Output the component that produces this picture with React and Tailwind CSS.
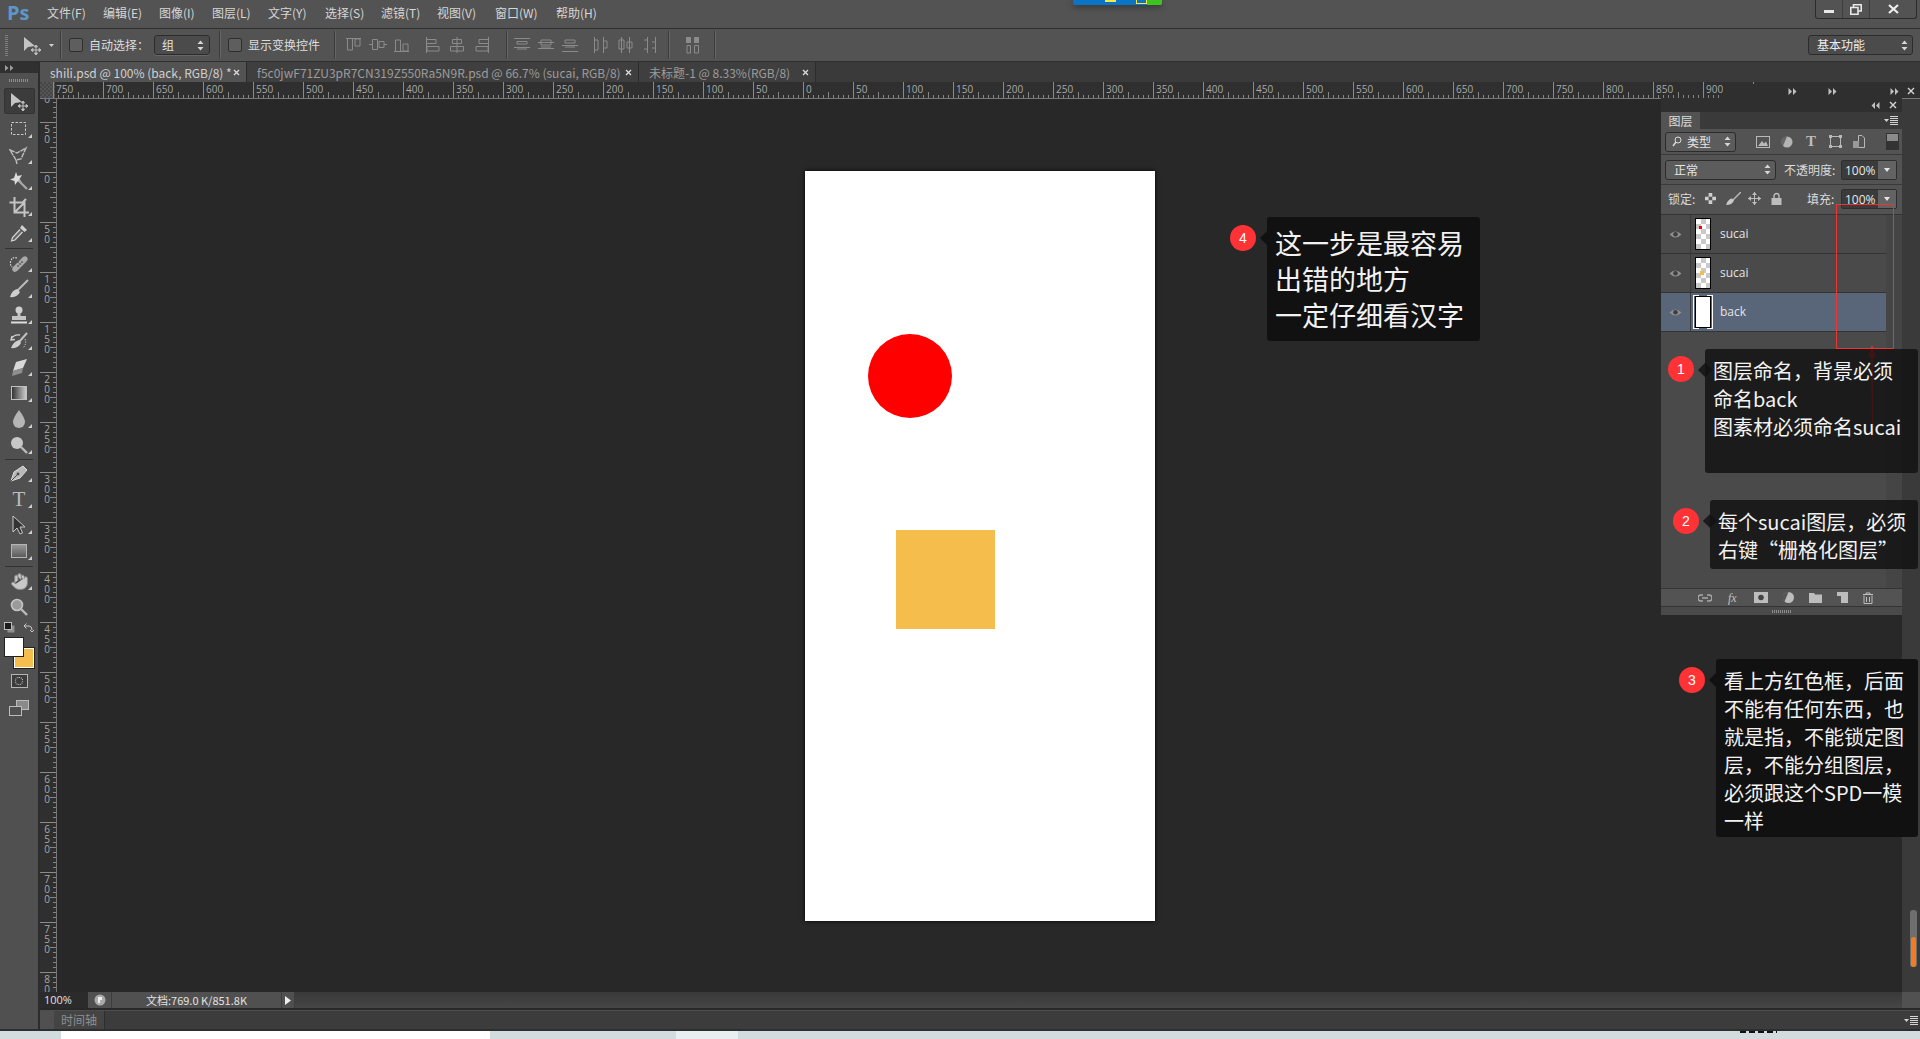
import React from "react";
import { Hand } from "lucide-react";

const cjk = "font-['Noto_Sans_CJK_SC','Noto_Sans',sans-serif]";

const menus = [
  ["文件(F)", "w-[56px]"],
  ["编辑(E)", "w-[56px]"],
  ["图像(I)", "w-[53px]"],
  ["图层(L)", "w-[56px]"],
  ["文字(Y)", "w-[57px]"],
  ["选择(S)", "w-[56px]"],
  ["滤镜(T)", "w-[56px]"],
  ["视图(V)", "w-[58px]"],
  ["窗口(W)", "w-[61px]"],
  ["帮助(H)", "w-[64px]"],
];

const hLabels = [750, 700, 650, 600, 550, 500, 450, 400, 350, 300, 250, 200, 150, 100, 50, 0, 50, 100, 150, 200, 250, 300, 350, 400, 450, 500, 550, 600, 650, 700, 750, 800, 850, 900, 950];
const vLabels = [100, 50, 0, 50, 100, 150, 200, 250, 300, 350, 400, 450, 500, 550, 600, 650, 700, 750, 800];

// small ticks shared by both rulers
const tickOffsets = [5, 10, 15, 20, 25, 30, 35, 40, 45];

const HRulerCell = ({ label }) => (
  <div className="relative w-[50px] h-full shrink-0 border-l border-[#8a8a8a]">
    <span className="block pl-[2px] pt-[1px] text-[10px] leading-[12px] text-[#a9a9a9] font-['Open_Sans',sans-serif]">{label}</span>
    <svg width="50" height="6" className="absolute bottom-0 left-0">
      {tickOffsets.map((t) => (
        <line key={t} x1={t - 0.5} x2={t - 0.5} y1={t === 25 ? 0 : 3} y2="6" stroke="#858585" />
      ))}
    </svg>
  </div>
);

const VRulerCell = ({ label }) => (
  <div className="relative h-[50px] w-full shrink-0 border-t border-[#8a8a8a]">
    <div className="flex flex-col pl-[3px] pt-[1px] w-[11px] items-center">
      {String(label).split("").map((d, i) => (
        <span key={i} className="block h-[10px] text-[10px] leading-[10px] text-[#a9a9a9] font-['Open_Sans',sans-serif]">{d}</span>
      ))}
    </div>
    <svg width="6" height="50" className="absolute right-0 top-0">
      {tickOffsets.map((t) => (
        <line key={t} y1={t - 0.5} y2={t - 0.5} x1={t === 25 ? 0 : 3} x2="6" stroke="#858585" />
      ))}
    </svg>
  </div>
);

const Spinner = ({ className = "" }) => (
  <svg width="7" height="11" viewBox="0 0 7 11" className={className}>
    <path d="M3.5 0.5 L6.5 4 H0.5 Z M3.5 10.5 L0.5 7 H6.5 Z" fill="#d6d6d6" />
  </svg>
);

const Select = ({ text, className }) => (
  <div className={`flex items-center justify-between rounded-[3px] border border-[#2c2c2c] bg-[#4b4b4b] text-[12px] text-[#e2e2e2] shadow-[0_1px_0_#666] ${className}`}>
    <span>{text}</span>
    <Spinner />
  </div>
);

const Check = ({ className = "" }) => (
  <div className={`size-[14px] rounded-[2px] border border-[#2e2e2e] bg-[#5e5e5e] ${className}`} />
);

const Sep = ({ className = "" }) => <div className={`w-px h-[28px] bg-[#3c3c3c] border-r border-[#666] box-content ${className}`} />;

// option bar align buttons, drawn with plain rects and lines
const alignIcons = [
  "M1 1.5H16 M2.5 1.5V13H7.5V1.5 M10 2H15V9H10Z",
  "M0 7.5H3 M15 7.5H18 M3.5 2.5V12.5H8.5V2.5Z M10 4.5H15V10.5H10Z",
  "M1 14.5H16 M2.5 14.5V3H7.5V14.5 M10 14V7H15V14Z",
  "M1.5 0V16 M1.5 2.5H11V6.5H1.5 M2 9.5H14V14H2Z",
  "M8 0V16 M3.5 2.5H12.5V6.5H3.5Z M1.5 9.5H14.5V14H1.5Z",
  "M15.5 0V16 M15.5 2.5H6V6.5H15.5 M15 9.5H3V14H15Z",
  "M1 1.5H17 M4 4.5H14 V7 H4Z M1 10.5H17 M4 12H14",
  "M1 5.5H17 M4 3H14 V8 H4Z M1 11.5H17 M4 10H14",
  "M1 8.5H17 M4 10H14 M4 6H14 V3H4Z M1 14.5H17",
  "M2.5 0V16 M2.5 3H6V13H2.5 M11.5 0V16 M11.5 4H15V11H11.5",
  "M5.5 0V16 M3 3H8V12H3Z M13.5 0V16 M11 5H16V11H11Z",
  "M7.5 0V16 M4 3H7.5V12H4 M15.5 0V16 M12 5H15.5V11H12",
];

const AlignIcon = ({ d }) => (
  <svg width="18" height="16" viewBox="0 0 18 16" className="shrink-0">
    <path d={d} fill="none" stroke="#8b8b8b" strokeWidth="1" />
  </svg>
);

const icons = {
  move: (
    <g>
      <path d="M2 2 L2 16 L6 12 L13 11 Z" fill="#c4c4c4" />
      <path d="M14 10V20 M9 15H19 M14 10l-1.5 2h3Z M14 20l-1.5-2h3Z M9 15l2-1.5v3Z M19 15l-2-1.5v3Z" stroke="#bdbdbd" strokeWidth="1" fill="#bdbdbd" />
    </g>
  ),
  marquee: <rect x="2.5" y="3.5" width="14" height="12" fill="none" stroke="#c8c8c8" strokeDasharray="2.5 1.5" />,
  lasso: <path d="M1 5 L8 8 L17 3 L12 14 L7 15 Z M7 15 L8 19" fill="none" stroke="#bdbdbd" strokeWidth="1.4" strokeDasharray="5 0.8" />,
  wand: (
    <g>
      <path d="M7 1 L8.5 5 L13 4 L10.5 8 L13 12 L8.5 10.5 L6 14 L5.5 10 L1 8.5 L5 7 Z" fill="#dcdcdc" />
      <path d="M9.5 9.5 L18 18" stroke="#a9a9a9" strokeWidth="2.2" />
    </g>
  ),
  crop: <path d="M5.5 0V15.5H20 M0.5 5.5H15.5V20 M5.5 15.5 L15.5 5.5 M17 2 L14 5" fill="none" stroke="#c4c4c4" strokeWidth="2" />,
  eyedropper: (
    <g>
      <path d="M13 2 L18 7 L15.5 9 L11 5 Z" fill="#d0d0d0" />
      <path d="M11 6.5 L3.5 14.5 L2.5 18 L6 17 L13.5 9" fill="#666" stroke="#d5d5d5" strokeWidth="1.2" />
    </g>
  ),
  heal: (
    <g>
      <path d="M4 14 L14 4 Q17 2 18.5 5 Q19.5 7 17 9 L8 18 Q5 20 3.5 17.5 Q2.5 15.5 4 14Z" fill="#aaa" />
      <path d="M8 5 Q3 3 1.5 9 Q1 12 3 14" fill="none" stroke="#d5d5d5" strokeDasharray="1.5 1.2" strokeWidth="1.2" />
      <circle cx="11" cy="11" r="0.9" fill="#555" />
      <circle cx="9" cy="9" r="0.9" fill="#555" />
      <circle cx="13" cy="9" r="0.9" fill="#555" />
      <circle cx="9" cy="13" r="0.9" fill="#555" />
    </g>
  ),
  brush: (
    <g>
      <path d="M19 1 L8 12" stroke="#bcbcbc" strokeWidth="2" />
      <path d="M8 10 Q3 11 1 18 Q8 19 11 13 Z" fill="#cfcfcf" />
    </g>
  ),
  stamp: (
    <g>
      <circle cx="10" cy="5" r="3.5" fill="#cfcfcf" />
      <path d="M8.5 8H11.5V11H17V15H3V11H8.5Z" fill="#c4c4c4" />
      <rect x="2" y="16.5" width="16" height="2" fill="#dcdcdc" />
    </g>
  ),
  history: (
    <g>
      <path d="M18 2 L10 11" stroke="#c0c0c0" strokeWidth="2" />
      <path d="M10 9 Q4 11 2 17 Q9 18 12 12 Z" fill="#cfcfcf" />
      <path d="M2 8 Q5 3 11 4 M3 5 L2 9 L6 8.5" fill="none" stroke="#d0d0d0" strokeWidth="1.4" />
      <path d="M16 8 Q18 13 14 17" fill="none" stroke="#d0d0d0" strokeDasharray="1.3 1.2" />
    </g>
  ),
  eraser: (
    <g>
      <path d="M7 5 L18 2 L14 11 L4 14 Z" fill="#d8d8d8" />
      <path d="M4 14 L14 11 L13 16 L3 19 Z" fill="#8e8e8e" />
    </g>
  ),
  gradient: (
    <g>
      <defs>
        <linearGradient id="toolGrad" x1="0" x2="1">
          <stop offset="0" stopColor="#2e2e2e" />
          <stop offset="1" stopColor="#cfcfcf" />
        </linearGradient>
      </defs>
      <rect x="2.5" y="3.5" width="15" height="13" fill="url(#toolGrad)" stroke="#c0c0c0" />
    </g>
  ),
  blur: <path d="M10 1 Q16 9 16 13 A6 6 0 0 1 4 13 Q4 9 10 1Z" fill="#b5b5b5" />,
  dodge: (
    <g>
      <circle cx="8" cy="8" r="6" fill="#c8c8c8" />
      <path d="M12 12 L18 18" stroke="#bbb" strokeWidth="2.4" />
    </g>
  ),
  pen: (
    <g>
      <path d="M14 3 L18 7 L11 15 L2 18 L5 9 Z" fill="#b9b9b9" stroke="#dadada" />
      <path d="M2 18 L8.5 11.5" stroke="#4a4a4a" />
      <circle cx="9" cy="11" r="1.4" fill="#4a4a4a" />
    </g>
  ),
  path: <path d="M4 1 L4 17 L8 13 L11 19 L13.5 18 L11 12 L16 12 Z" fill="#333" stroke="#c8c8c8" />,
  shape: (
    <g>
      <defs>
        <linearGradient id="toolShape" x1="0" x2="0" y1="0" y2="1">
          <stop offset="0" stopColor="#9a9a9a" />
          <stop offset="1" stopColor="#5a5a5a" />
        </linearGradient>
      </defs>
      <rect x="2.5" y="3.5" width="15" height="13" fill="url(#toolShape)" stroke="#b5b5b5" />
    </g>
  ),
  zoom: (
    <g>
      <circle cx="8" cy="8" r="5.5" fill="#9a9a9a" stroke="#c4c4c4" strokeWidth="1.6" />
      <path d="M12 12 L18 18" stroke="#bbb" strokeWidth="2.4" />
    </g>
  ),
};

const Tool = ({ name, corner = true, active = false, children }) => (
  <div className={`relative flex items-center justify-center w-[31px] h-[26px] mx-auto ${active ? "h-[24px] mb-[2px] rounded-[2px] bg-[#3c3c3c] border border-[#333]" : ""}`}>
    {children || (
      <svg width="20" height="20" viewBox="0 0 20 20">
        {icons[name]}
      </svg>
    )}
    {corner && (
      <svg width="4" height="4" className="absolute right-[3px] bottom-[4px]">
        <path d="M4 0V4H0Z" fill="#cfcfcf" />
      </svg>
    )}
  </div>
);

const ToolSep = ({ className = "" }) => (
  <div className={`flex items-center ${className}`}>
    <div className="mx-[5px] w-[29px] h-px bg-[#333]" />
  </div>
);

const Toolbar = () => (
  <div className="w-[40px] shrink-0 flex flex-col bg-[#505050] border-r-2 border-[#2d2d2d]">
    <div className="h-[11px] bg-[#303030] flex items-center pl-[5px]">
      <svg width="9" height="6"><path d="M0 0L3.5 3L0 6Z M5 0L8.5 3L5 6Z" fill="#9c9c9c" /></svg>
    </div>
    <div className="h-[15px] flex items-center justify-center">
      <div className="w-[20px] h-[3px] bg-[repeating-linear-gradient(90deg,#8c8c8c_0_1px,transparent_1px_2px)]" />
    </div>
    <Tool name="move" corner={false} active />
    <Tool name="marquee" />
    <Tool name="lasso" />
    <Tool name="wand" />
    <Tool name="crop" />
    <Tool name="eyedropper" />
    <ToolSep className="h-[4px]" />
    <Tool name="heal" />
    <Tool name="brush" />
    <Tool name="stamp" />
    <Tool name="history" />
    <Tool name="eraser" />
    <Tool name="gradient" />
    <Tool name="blur" />
    <Tool name="dodge" />
    <ToolSep className="h-[2px]" />
    <Tool name="pen" />
    <Tool name="text">
      <span className="font-['Liberation_Serif',serif] text-[21px] leading-none text-[#bdbdbd]">T</span>
    </Tool>
    <Tool name="path" />
    <Tool name="shape" />
    <ToolSep className="h-[4px]" />
    <Tool name="hand">
      <Hand size={19} fill="#c8c8c8" stroke="#8a8a8a" strokeWidth={1.2} />
    </Tool>
    <Tool name="zoom" corner={false} />
    <div className="h-[14px] flex items-center justify-between px-[4px]">
      <svg width="11" height="11"><rect x="3.5" y="3.5" width="7" height="7" fill="#8e8e8e" /><rect x="0.5" y="0.5" width="7" height="7" fill="#1c1c1c" stroke="#bbb" /></svg>
      <svg width="11" height="11" viewBox="0 0 11 11"><path d="M1 4H6Q9 4 9 8 M1 4l2.5-2.5M1 4l2.5 2.5 M9 10l-2-2M9 10l2-2" fill="none" stroke="#c8c8c8" /></svg>
    </div>
    <div className="relative h-[37px] mt-[3px]">
      <div className="absolute left-[14px] top-[11px] size-[20px] bg-[#f4bd4c] border border-white outline outline-[#222]" />
      <div className="absolute left-[4px] top-0 size-[20px] bg-white border border-[#222]" />
    </div>
    <div className="mx-auto w-[17px] h-[14px] border border-[#b5b5b5] bg-[#3c3c3c] flex items-center justify-center">
      <div className="size-[8px] rounded-full border border-dotted border-[#dadada]" />
    </div>
    <div className="mt-[12px] relative mx-auto w-[20px] h-[16px]">
      <div className="absolute right-0 top-0 w-[13px] h-[10px] bg-[#8a8a8a] border border-[#bcbcbc]" />
      <div className="absolute left-0 bottom-0 w-[13px] h-[10px] bg-[#505050] border border-[#bcbcbc]" />
    </div>
  </div>
);

const OptionsBar = () => (
  <div className={`relative h-[34px] shrink-0 flex items-center bg-[#535353] border-t border-b border-[#2f2f2f] text-[12px] text-[#dddddd] ${cjk}`}>
    <div className="ml-[5px] w-[3px] h-[22px] bg-[repeating-linear-gradient(0deg,#7e7e7e_0_1px,transparent_1px_2px)]" />
    <svg width="20" height="20" viewBox="0 0 20 20" className="ml-[14px]">{icons.move}</svg>
    <svg width="5" height="3" className="ml-[7px]"><path d="M0 0H5L2.5 3Z" fill="#d0d0d0" /></svg>
    <Sep className="ml-[6px]" />
    <Check className="ml-[7px]" />
    <span className="ml-[6px] w-[53px] whitespace-nowrap">自动选择：</span>
    <Select text="组" className="ml-[12px] w-[56px] h-[20px] pl-[7px] pr-[5px]" />
    <Sep className="ml-[9px]" />
    <Check className="ml-[7px]" />
    <span className="ml-[6px] whitespace-nowrap">显示变换控件</span>
    <Sep className="ml-[14px]" />
    <div className="ml-[9px] flex gap-[6px]">
      {alignIcons.slice(0, 3).map((d) => <AlignIcon key={d} d={d} />)}
    </div>
    <div className="ml-[14px] flex gap-[6px]">
      {alignIcons.slice(3, 6).map((d) => <AlignIcon key={d} d={d} />)}
    </div>
    <Sep className="ml-[15px]" />
    <div className="ml-[5px] flex gap-[6px]">
      {alignIcons.slice(6, 9).map((d) => <AlignIcon key={d} d={d} />)}
    </div>
    <div className="ml-[13px] flex gap-[6px]">
      {alignIcons.slice(9, 12).map((d) => <AlignIcon key={d} d={d} />)}
    </div>
    <Sep className="ml-[10px]" />
    <svg width="18" height="18" viewBox="0 0 18 18" className="ml-[14px]">
      <path d="M2 1H7V7H2Z M10 1H15V7H10Z" fill="#8b8b8b" />
      <path d="M3 9.5H6.5V17H3Z M10.5 9.5H14.5V17H10.5Z" fill="none" stroke="#8b8b8b" />
    </svg>
    <Sep className="ml-[12px]" />
    <div className="ml-auto mr-[7px] w-[105px] h-[20px] flex items-center justify-between rounded-[3px] border border-[#2c2c2c] bg-[#4b4b4b] pl-[8px] pr-[4px] text-[#ececec]">
      <span>基本功能</span>
      <Spinner />
    </div>
  </div>
);

const tabs = [
  { text: "shili.psd @ 100% (back, RGB/8) *", w: "w-[207px]", active: true },
  { text: "f5c0jwF71ZU3pR7CN319Z550Ra5N9R.psd @ 66.7% (sucai, RGB/8)", w: "w-[392px]" },
  { text: "未标题-1 @ 8.33%(RGB/8)", w: "w-[177px]" },
];

const Tabs = () => (
  <div className="h-[20px] shrink-0 flex bg-[#3a3a3a] text-[12px]">
    {tabs.map((t) => (
      <div
        key={t.text}
        className={`${t.w} flex items-center justify-between pl-[10px] pr-[6px] pt-[1px] border-r border-[#2c2c2c] whitespace-nowrap ${t.active ? "bg-[#535353] text-[#d0d0d0]" : "bg-[#3f3f3f] text-[#9c9c9c]"} ${cjk}`}
      >
        <span>{t.text}</span>
        <svg width="7" height="7" className="shrink-0"><path d="M1 1L6 6M6 1L1 6" stroke="#dcdcdc" strokeWidth="1.3" /></svg>
      </div>
    ))}
  </div>
);

const PanelMenu = ({ className = "" }) => (
  <svg width="14" height="9" viewBox="0 0 14 9" className={className}>
    <path d="M0 3H5L2.5 6Z" fill="#d4d4d4" />
    <path d="M6 0.5H14M6 2.5H14M6 4.5H14M6 6.5H14M6 8.5H14" stroke="#d4d4d4" />
  </svg>
);

const DoubleArrow = ({ left = false, className = "" }) => (
  <svg width="9" height="7" className={className}>
    {left ? (
      <path d="M4 0L0.5 3.5L4 7Z M8.5 0L5 3.5L8.5 7Z" fill="#c0c0c0" />
    ) : (
      <path d="M0.5 0L4 3.5L0.5 7Z M5 0L8.5 3.5L5 7Z" fill="#c0c0c0" />
    )}
  </svg>
);

const CloseX = ({ className = "" }) => (
  <svg width="8" height="8" className={className}><path d="M1 1L7 7M7 1L1 7" stroke="#d6d6d6" strokeWidth="1.4" /></svg>
);

const Eye = () => (
  <svg width="13" height="9" viewBox="0 0 13 9">
    <path d="M0.5 4.5Q6.5 -1.5 12.5 4.5Q6.5 10.5 0.5 4.5Z" fill="#8f8f8f" />
    <circle cx="6.5" cy="4.2" r="2.3" fill="#3e3e3e" />
  </svg>
);

const checker = "bg-[repeating-conic-gradient(#c9c9c9_0%_25%,#ffffff_0%_50%)] bg-size-[10px_10px]";

const LayerRow = ({ name, dot, selected, className = "" }) => (
  <div className={`flex items-stretch border-b border-[#333] ${selected ? "bg-[#596578] h-[39px]" : "bg-[#4a4a4a] h-[39px]"} ${className}`}>
    <div className="w-[30px] shrink-0 flex items-center justify-center border-r border-[#3a3a3a]">
      <Eye />
    </div>
    <div className="relative ml-[4px] my-auto">
      <div className={`relative w-[16px] h-[32px] border border-black ${selected ? "bg-white" : checker}`}>
        {dot}
      </div>
      {selected && (
        <div className="absolute -inset-x-[2px] -inset-y-[1px] border border-white [clip-path:polygon(0_0,30%_0,30%_10%,70%_10%,70%_0,100%_0,100%_100%,70%_100%,70%_90%,30%_90%,30%_100%,0_100%)]" />
      )}
    </div>
    <span className="ml-[9px] self-center text-[12px] text-[#e4e4e4] font-['Open_Sans',sans-serif]">{name}</span>
  </div>
);

const PercentField = () => (
  <div className="flex w-[56px] h-[20px] rounded-[2px] border border-[#2e2e2e] text-[12px] text-[#e8e8e8] font-['Open_Sans',sans-serif]">
    <div className="w-[36px] bg-[#3b3b3b] pl-[3px] leading-[19px]">100%</div>
    <div className="flex-1 bg-[#636363] flex items-center justify-center">
      <svg width="6" height="4"><path d="M0 0H6L3 4Z" fill="#e6e6e6" /></svg>
    </div>
  </div>
);

const LayersPanel = () => (
  <div className={`absolute right-[18px] top-[98px] w-[241px] h-[517px] flex flex-col bg-[#4a4a4a] ${cjk}`}>
    <div className="h-[14px] shrink-0 bg-[#2f2f2f] flex items-center justify-end gap-[9px] pr-[5px]">
      <DoubleArrow left />
      <CloseX />
    </div>
    <div className="h-[17px] shrink-0 bg-[#3a3a3a] flex justify-between items-center">
      <div className="w-[39px] h-full bg-[#535353] flex items-center justify-center text-[12px] text-[#dcdcdc]">图层</div>
      <PanelMenu className="mr-[4px]" />
    </div>
    <div className="h-[26px] shrink-0 flex items-center pl-[4px] bg-[#535353] border-b border-[#3a3a3a]">
      <div className="w-[71px] h-[20px] flex items-center rounded-[3px] border border-[#2c2c2c] bg-[#5c5c5c] pl-[6px] pr-[4px] text-[12px] text-[#e4e4e4]">
        <svg width="10" height="11" viewBox="0 0 10 11"><circle cx="6" cy="4" r="3" fill="none" stroke="#ddd" /><path d="M4 6L1 10" stroke="#ddd" strokeWidth="1.4" /></svg>
        <span className="ml-[5px]">类型</span>
        <Spinner className="ml-auto" />
      </div>
      <svg width="14" height="12" viewBox="0 0 14 12" className="ml-[20px]"><rect x="0.5" y="0.5" width="13" height="11" fill="none" stroke="#b8b8b8" /><path d="M2 10L6 5L8 7.5L10 5.5L12 10Z" fill="#b8b8b8" /></svg>
      <svg width="12" height="12" viewBox="0 0 12 12" className="ml-[11px]"><circle cx="6" cy="6" r="5.5" fill="#b4b4b4" /><path d="M6 0.5A5.5 5.5 0 0 0 2 10Z" fill="#666" /></svg>
      <span className="ml-[11px] w-[14px] text-center font-['Liberation_Serif',serif] text-[15px] leading-none text-[#bcbcbc] font-bold">T</span>
      <svg width="13" height="13" viewBox="0 0 13 13" className="ml-[11px]"><rect x="1.5" y="1.5" width="10" height="10" fill="none" stroke="#b8b8b8" /><path d="M0 0H3V3H0Z M10 0H13V3H10Z M0 10H3V13H0Z M10 10H13V13H10Z" fill="#b8b8b8" /></svg>
      <svg width="12" height="13" viewBox="0 0 12 13" className="ml-[11px]"><path d="M5.5 0.5H9L11.5 3V12.5H5.5Z" fill="none" stroke="#b8b8b8" /><rect x="0" y="6" width="6" height="7" fill="#9a9a9a" /></svg>
      <div className="ml-[21px] w-[13px] h-[17px] border border-[#333] bg-[#333]">
        <div className="h-[7px] bg-[#8a8a8a]" />
      </div>
    </div>
    <div className="h-[30px] shrink-0 flex items-center pl-[4px] pr-[5px] bg-[#535353] border-b border-[#3a3a3a]">
      <div className="w-[111px] h-[20px] flex items-center justify-between rounded-[3px] border border-[#2c2c2c] bg-[#5c5c5c] pl-[8px] pr-[4px] text-[12px] text-[#e4e4e4]">
        <span>正常</span>
        <Spinner />
      </div>
      <span className="ml-[8px] text-[12px] text-[#dadada] whitespace-nowrap">不透明度:</span>
      <div className="ml-auto"><PercentField /></div>
    </div>
    <div className="h-[30px] shrink-0 flex items-center pl-[7px] pr-[5px] pb-[2px] bg-[#535353] border-b border-[#333] text-[12px] text-[#dadada]">
      <span className="w-[37px]">锁定:</span>
      <svg width="11" height="11" viewBox="0 0 10 10"><path d="M0 0H10V10H0Z" fill="#cfcfcf" /><path d="M0 0H3.3V3.3H0Z M6.6 0H10V3.3H6.6Z M3.3 3.3H6.6V6.6H3.3Z M0 6.6H3.3V10H0Z M6.6 6.6H10V10H6.6Z" fill="#555" /></svg>
      <svg width="15" height="13" viewBox="0 0 15 13" className="ml-[10px]"><path d="M15 0L7 8" stroke="#b8b8b8" strokeWidth="1.5" /><path d="M6 6.5Q2 7 0 13Q6 13 8 8.5Z" fill="#c8c8c8" /></svg>
      <svg width="13" height="13" viewBox="0 0 13 13" className="ml-[7px]"><path d="M6.5 0V13 M0 6.5H13" stroke="#bdbdbd" /><path d="M6.5 0L4 3H9Z M6.5 13L4 10H9Z M0 6.5L3 4V9Z M13 6.5L10 4V9Z" fill="#bdbdbd" /></svg>
      <svg width="11" height="13" viewBox="0 0 11 13" className="ml-[10px]"><path d="M3 6V4A2.5 2.5 0 0 1 8 4V6" fill="none" stroke="#bdbdbd" strokeWidth="1.4" /><rect x="0.5" y="6" width="10" height="7" fill="#bdbdbd" /></svg>
      <span className="ml-[25px]">填充:</span>
      <div className="ml-auto"><PercentField /></div>
    </div>
    <div className="flex-1 flex min-h-0">
      <div className="flex-1 flex flex-col">
        <LayerRow name="sucai" dot={<div className="absolute left-[3px] top-[7px] size-[3px] bg-[#ff0000]" />} />
        <LayerRow name="sucai" dot={<div className="absolute left-[4px] top-[13px] size-[4px] bg-[#f4bd4c]" />} />
        <LayerRow name="back" selected />
      </div>
      <div className="w-[16px] bg-[#454545]" />
    </div>
    <div className="h-[19px] shrink-0 bg-[#535353] border-t border-b border-[#333] flex items-center pl-[37px] gap-[14px]">
      <svg width="14" height="8" viewBox="0 0 14 8"><path d="M5 1H3A3 3 0 0 0 3 7H5 M9 1H11A3 3 0 0 1 11 7H9 M4 4H10" fill="none" stroke="#a8a8a8" strokeWidth="1.4" /></svg>
      <span className="ml-[2px] w-[12px] text-[12px] italic leading-none text-[#c0c0c0] font-['Liberation_Serif',serif]">fx</span>
      <svg width="14" height="11" viewBox="0 0 14 11"><rect width="14" height="11" fill="#bdbdbd" /><circle cx="7" cy="5.5" r="2.8" fill="#444" /></svg>
      <svg width="13" height="13" viewBox="0 0 13 13"><circle cx="6.5" cy="6.5" r="5.5" fill="#bdbdbd" /><path d="M6.5 1A5.5 5.5 0 0 0 2.5 10.5Z" fill="#555" /></svg>
      <svg width="13" height="11" viewBox="0 0 13 11"><path d="M0 1H5L6 2.5H13V11H0Z" fill="#bdbdbd" /></svg>
      <svg width="11" height="11" viewBox="0 0 11 11" className="ml-[1px]"><path d="M0 0H11V11H4V4H0Z" fill="#bdbdbd" /></svg>
      <svg width="12" height="12" viewBox="0 0 12 12"><path d="M1 2.5H11 M4 2V1H8V2 M2 3.5V11.5H10V3.5 M4.5 5V10 M7.5 5V10" fill="none" stroke="#bdbdbd" /></svg>
    </div>
    <div className="h-[8px] shrink-0 bg-[#4a4a4a] flex items-center justify-center">
      <div className="w-[20px] h-[3px] bg-[repeating-linear-gradient(90deg,#8c8c8c_0_1px,transparent_1px_2px)]" />
    </div>
  </div>
);

const Callout = ({ n, lines, className, boxClass, badgeTop }) => (
  <div className={`absolute flex items-start ${className} ${cjk}`}>
    <div className={`size-[26px] rounded-full bg-[#ff3336] flex items-center justify-center text-[14px] text-white font-['Liberation_Sans',sans-serif] ${badgeTop}`}>{n}</div>
    <div className={`relative ml-[11px] rounded-[3px] px-[8px] py-[8px] text-[20px] leading-[28px] text-[#f2f2f2] whitespace-nowrap ${boxClass}`}>
      <div className="absolute -left-[5px] top-[16px] size-[10px] rotate-45 bg-inherit" />
      <div className="relative">
        {lines.map((l) => <div key={l}>{l}</div>)}
      </div>
    </div>
  </div>
);

export default function App() {
  return (
    <div className="relative w-[1920px] h-[1039px] overflow-hidden flex flex-col bg-[#282828]">
      {/* menu bar */}
      <div className={`h-[28px] shrink-0 flex items-center pb-[2px] bg-[#535353] text-[12px] text-[#d6d6d6] ${cjk}`}>
        <span className="w-[47px] pl-[7px] text-[20px] leading-[24px] font-bold text-[#5d97c9] font-['Open_Sans',sans-serif]">Ps</span>
        {menus.map(([m, w]) => <span key={m} className={`${w} whitespace-nowrap`}>{m}</span>)}
      </div>

      <OptionsBar />

      {/* work area */}
      <div className="flex-1 flex min-h-0">
        <Toolbar />
        <div className="flex-1 min-w-0 flex flex-col">
          <Tabs />
          <div className="h-[17px] shrink-0 flex bg-[#2f2f2f] border-b border-[#777] overflow-hidden">
            <div className="w-[15px] shrink-0 bg-[#4a4a4a] bg-[repeating-conic-gradient(#555_0%_25%,#464646_0%_50%)] bg-size-[4px_4px]" />
            <div className="flex -ml-[2px]">
              {hLabels.map((l, i) => <HRulerCell key={i} label={l} />)}
            </div>
          </div>
          <div className="flex-1 min-h-0 flex">
            <div className="w-[17px] shrink-0 bg-[#2f2f2f] border-r border-[#777] overflow-hidden flex flex-col">
              <div className="-mt-[27px]">
                {vLabels.map((l, i) => <VRulerCell key={i} label={l} />)}
              </div>
            </div>
            <div className="flex-1 flex items-center justify-center">
              {/* document */}
              <div className="relative w-[350px] h-[750px] bg-white shadow-[0_0_4px_#000]">
                <div className="absolute left-[63px] top-[163px] size-[84px] rounded-full bg-[#ff0000]" />
                <div className="absolute left-[91px] top-[359px] size-[99px] bg-[#f4bd4c]" />
              </div>
            </div>
            <div className="w-[18px] shrink-0 bg-[#3a3a3a] flex flex-col justify-end pb-[25px] items-center">
              <div className="ml-[5px] w-[7px] h-[57px] rounded-[3px] bg-[#6f6f6f] flex flex-col justify-end">
                <div className="mx-auto w-[5px] h-[30px] rounded-[3px] bg-[#f47b20]" />
              </div>
            </div>
          </div>
          {/* status bar */}
          <div className="h-[16px] shrink-0 flex text-[11px] bg-[#454545]">
            <div className="w-[48px] bg-[#2b2b2b] pl-[4px] leading-[16px] text-[#e0e0e0] font-['Open_Sans',sans-serif]">100%</div>
            <div className="w-[24px] bg-[#505050] flex items-center justify-center border-r border-[#3d3d3d]">
              <svg width="12" height="12" viewBox="0 0 12 12"><circle cx="6" cy="6" r="5.5" fill="#aaa" /><path d="M4 3H8V6H6V9H4Z" fill="#eee" /></svg>
            </div>
            <div className={`w-[170px] bg-[#505050] flex items-center justify-center text-[#e2e2e2] border-r border-[#3d3d3d] ${cjk}`}>文档:769.0 K/851.8K</div>
            <div className="w-[13px] bg-[#505050] flex items-center justify-center border-r border-[#3d3d3d]">
              <svg width="6" height="9"><path d="M0 0L6 4.5L0 9Z" fill="#eee" /></svg>
            </div>
            <div className="flex-1 bg-linear-to-b from-[#393939] to-[#464646]" />
            <div className="w-[18px] bg-[#515151]" />
          </div>
          {/* timeline */}
          <div className="mt-[2px] h-[19px] shrink-0 flex bg-[#3c3c3c] border-t border-[#4e4e4e]">
            <div className="w-[14px] bg-[#505050]" />
            <div className={`w-[51px] flex items-center justify-center text-[12px] text-[#8f8f8f] border-r border-[#2e2e2e] bg-[#444] ${cjk}`}>时间轴</div>
            <PanelMenu className="ml-auto mr-[2px] mt-[5px]" />
          </div>
        </div>
      </div>

      {/* taskbar peeking out under the window */}
      <div className="h-[10px] shrink-0 border-t-2 border-[#2e2e2e] flex bg-[#d3dbdf]">
        <div className="ml-[61px] w-[429px] bg-white" />
        <div className="ml-[186px] w-[62px] bg-[#e9eef0]" />
        <div className="ml-[1002px] w-[37px] h-[2px] bg-[repeating-linear-gradient(90deg,#111_0_6px,transparent_6px_9px)]" />
      </div>

      {/* tray icon tucked into the top edge */}
      <div className="absolute left-[1073px] top-0 w-[89px] h-[5px] bg-[#0a74c6] rounded-b-[2px] flex shadow-[0_2px_6px_#0006]">
        <div className="ml-[32px] w-[11px] h-[2px] bg-[#f7e64a]" />
        <div className="ml-[20px] w-[11px] h-[4px] border border-t-0 border-[#f7e64a]" />
        <div className="ml-auto w-[15px] bg-[#3ec41f] rounded-br-[2px]" />
      </div>

      {/* window buttons */}
      <div className="absolute right-[3px] top-0 w-[102px] h-[19px] flex items-center border border-t-0 border-[#2c2c2c] rounded-b-[3px] bg-[#535353]">
        <div className="w-[27px] h-full flex items-center justify-center border-r border-[#3d3d3d]">
          <div className="mt-[4px] w-[10px] h-[3px] bg-[#e8e8e8]" />
        </div>
        <div className="w-[27px] h-full flex items-center justify-center border-r border-[#3d3d3d]">
          <svg width="12" height="11" viewBox="0 0 12 11"><path d="M3.5 3V0.8H11.2V7H8.5 M0.8 3.5H8V10.2H0.8Z" fill="none" stroke="#e8e8e8" strokeWidth="1.6" /></svg>
        </div>
        <div className="flex-1 flex items-center justify-center">
          <svg width="11" height="10"><path d="M1 1L10 9M10 1L1 9" stroke="#ededed" strokeWidth="2.2" /></svg>
        </div>
      </div>

      {/* collapsed dock strip over the ruler */}
      <div className="absolute right-0 top-[84px] w-[197px] h-[14px] rounded-tl-[2px] bg-[#2f2f2f] flex items-center pl-[65px]">
        <DoubleArrow />
        <DoubleArrow className="ml-[31px]" />
        <DoubleArrow className="ml-[53px]" />
        <CloseX className="ml-[8px]" />
      </div>

      <LayersPanel />

      {/* red arrow runs behind callout 1 */}
      <svg width="10" height="96" viewBox="0 0 10 96" className="absolute left-[1867px] top-[345px]">
        <path d="M5 0L1 12H9Z" fill="#ff2a2a" />
        <path d="M3.8 10L5.4 95H6.2L6.2 10Z" fill="#ff2a2a" />
      </svg>
      <div className="absolute left-[1836px] top-[204px] w-[58px] h-[145px] border border-[#ee3333]" />

      <Callout
        n="1"
        className="left-[1668px] top-[349px]"
        badgeTop="mt-[7px]"
        boxClass="w-[213px] h-[124px] bg-[#111111d0]"
        lines={["图层命名，背景必须", "命名back", "图素材必须命名sucai"]}
      />
      <Callout
        n="2"
        className="left-[1673px] top-[500px]"
        badgeTop="mt-[8px]"
        boxClass="w-[208px] h-[69px] bg-[#111111d0]"
        lines={["每个sucai图层，必须", "右键“栅格化图层”"]}
      />
      <Callout
        n="3"
        className="left-[1679px] top-[659px]"
        badgeTop="mt-[8px]"
        boxClass="w-[202px] h-[178px] bg-[#111111]"
        lines={["看上方红色框，后面", "不能有任何东西，也", "就是指，不能锁定图", "层，不能分组图层，", "必须跟这个SPD一模", "一样"]}
      />
      <Callout
        n="4"
        className="left-[1230px] top-[217px]"
        badgeTop="mt-[8px]"
        boxClass="w-[213px] h-[124px] !text-[27px] !leading-[36px] !py-[8px] bg-[#111111]"
        lines={["这一步是最容易", "出错的地方", "一定仔细看汉字"]}
      />
    </div>
  );
}
